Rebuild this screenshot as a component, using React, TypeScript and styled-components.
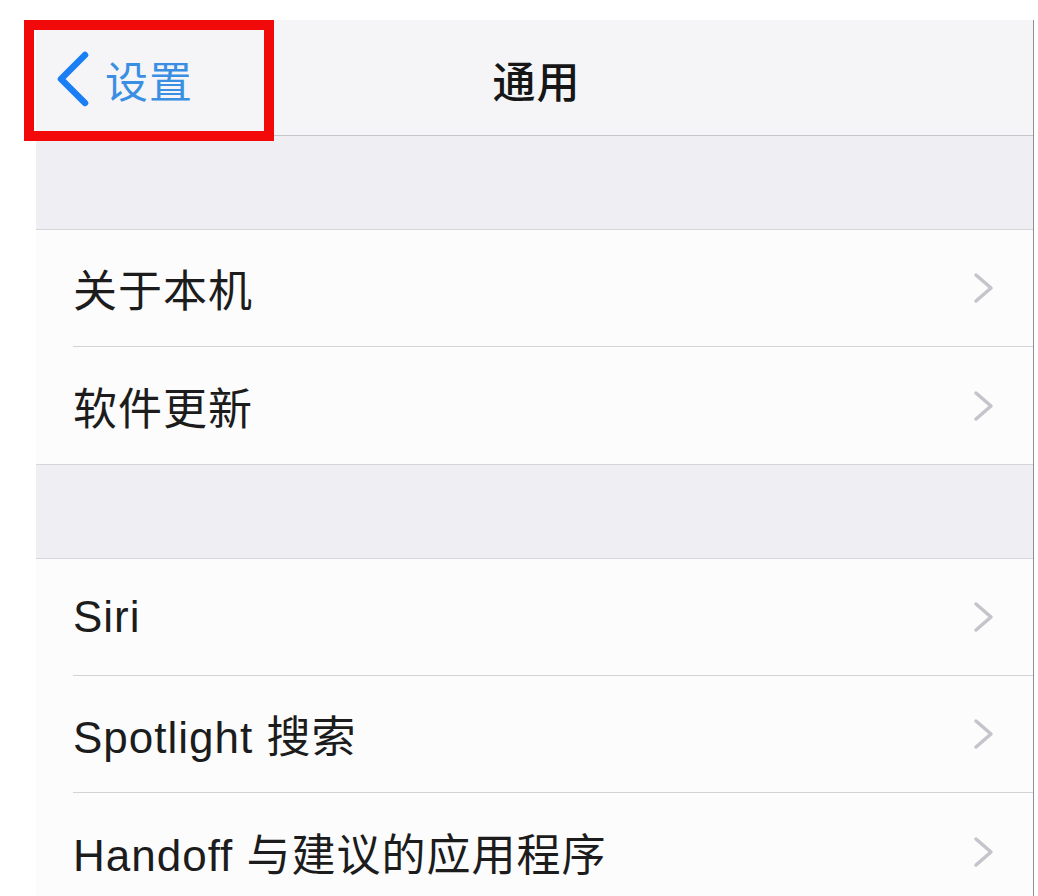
import styled, { createGlobalStyle } from "styled-components";

const GlobalStyle = createGlobalStyle`
  html, body {
    margin: 0;
    padding: 0;
    background: #ffffff;
  }
  body {
    font-family: "Liberation Sans", "Noto Sans CJK SC", sans-serif;
    -webkit-font-smoothing: antialiased;
  }
`;

type Row = { label: string };

const groups: Row[][] = [
  [{ label: "关于本机" }, { label: "软件更新" }],
  [
    { label: "Siri" },
    { label: "Spotlight 搜索" },
    { label: "Handoff 与建议的应用程序" },
  ],
];

const BackChevron = () => (
  <svg width="36" height="56" viewBox="0 0 36 56">
    <path
      d="M31 4 L7 28 L31 52"
      fill="none"
      stroke="#1a7ff5"
      strokeWidth="6.5"
      strokeLinecap="round"
      strokeLinejoin="round"
    />
  </svg>
);

const Disclosure = () => (
  <svg width="22" height="32" viewBox="0 0 22 32">
    <path
      d="M3 3 L18 16 L3 29"
      fill="none"
      stroke="#c4c4ca"
      strokeWidth="3.5"
      strokeLinecap="round"
      strokeLinejoin="round"
    />
  </svg>
);

const App = () => {
  return (
    <>
      <GlobalStyle />
      <Page>
        <Phone>
          <NavBar>
            <BackButton>
              <BackChevron />
              <span>设置</span>
            </BackButton>
            <Title>通用</Title>
          </NavBar>
          {groups.map((rows, gi) => (
            <Group key={gi}>
              <Spacer />
              <List>
                {rows.map((row) => (
                  <Cell key={row.label}>
                    <Label>{row.label}</Label>
                    <Disclosure />
                  </Cell>
                ))}
              </List>
            </Group>
          ))}
        </Phone>
        <Highlight />
      </Page>
    </>
  );
};
export default App;

const Page = styled.div`
  position: relative;
  height: 896px;
  overflow: hidden;
  padding: 20px 4px 0 36px;
  box-sizing: border-box;
`;

const Phone = styled.div`
  width: 997px;
  border-right: 1px solid #8e8e93;
  background: #fcfcfd;
  min-height: 900px;
`;

const NavBar = styled.div`
  position: relative;
  height: 115px;
  background: #f5f5f7;
  border-bottom: 1px solid #c6c6cb;
  display: flex;
  align-items: center;
  justify-content: center;
`;

const BackButton = styled.div`
  position: absolute;
  left: 18px;
  top: 0;
  bottom: 0;
  display: flex;
  align-items: center;
  gap: 15px;
  color: #3a8fe3;
  font-size: 43px;
  letter-spacing: 1px;
  padding-top: 2px;
`;

const Title = styled.div`
  font-size: 43px;
  font-weight: 500;
  color: #161616;
  letter-spacing: 1px;
  padding-top: 2px;
  padding-left: 4px;
`;

const Group = styled.section`
  display: flex;
  flex-direction: column;
`;

const Spacer = styled.div`
  height: 93px;
  background: #efeff3;
  border-bottom: 1px solid #d6d6da;
`;

const List = styled.div`
  background: #fcfcfd;
  border-bottom: 1px solid #d6d6da;
`;

const Cell = styled.div`
  height: 117px;
  margin-left: 37px;
  padding-right: 38px;
  display: flex;
  align-items: center;
  justify-content: space-between;
  border-bottom: 1px solid #d3d3d7;
  box-sizing: border-box;

  &:last-child {
    border-bottom: none;
  }
`;

const Label = styled.span`
  font-size: 44px;
  color: #1c1c1c;
  letter-spacing: 1px;
`;

const Highlight = styled.div`
  position: absolute;
  left: 24px;
  top: 20px;
  width: 250px;
  height: 121px;
  border: 10px solid #f20a0a;
  box-sizing: border-box;
  pointer-events: none;
`;
